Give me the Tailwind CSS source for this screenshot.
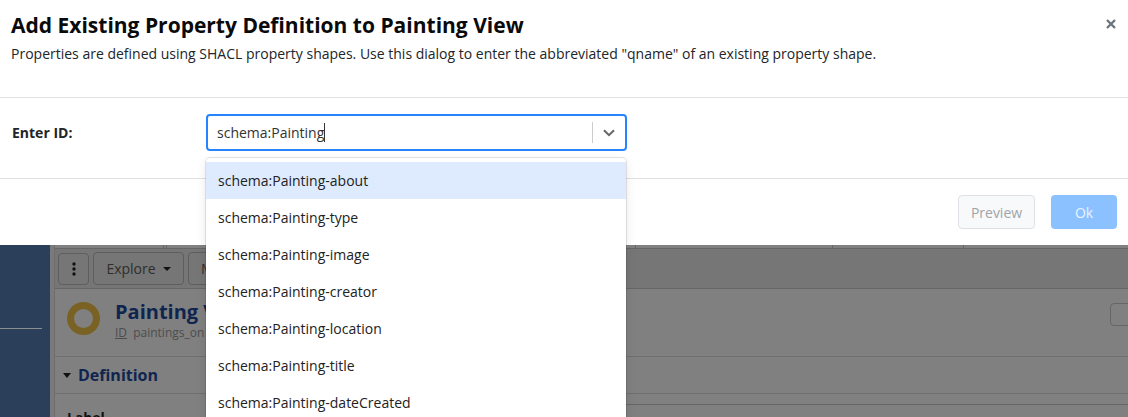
<!DOCTYPE html>
<html lang="en">
  <head>
    <meta charset="UTF-8" />
    <title>Add Existing Property Definition</title>
    <script src="https://cdn.jsdelivr.net/npm/@tailwindcss/browser@4"></script>
  </head>
  <body class="relative h-[417px] overflow-hidden bg-[#808080] font-['Open_Sans',sans-serif]">
    <!-- page behind the dialog -->
    <div class="flex h-[417px] pt-[245px]">
      <aside class="w-[50px] shrink-0 bg-[#2b3f5a] pt-[83px]">
        <div class="h-px w-[42px] bg-[#8a8f8f]"></div>
      </aside>
      <div class="w-[4px] shrink-0 bg-[#7a7a7a]"></div>
      <main class="flex-1 border-l border-[#6e6e6e]">
        <div class="flex h-[4px] border-b border-[#666]">
          <div class="ml-[108px] w-[4px] border-x border-[#666]"></div>
          <div class="ml-[468px] w-[198px] border-x border-[#666]"></div>
          <div class="ml-[2px] w-[129px] border-r border-[#666]"></div>
        </div>
        <div class="flex h-[40px] items-center gap-[4px] border-b border-[#666] bg-[#767676] px-[3px]">
          <button class="flex h-[32px] w-[31px] items-center justify-center rounded-[4px] border border-[#5e5e5e]">
            <svg width="4" height="14" viewBox="0 0 4 14" fill="#111"><circle cx="2" cy="2" r="1.7" /><circle cx="2" cy="7" r="1.7" /><circle cx="2" cy="12" r="1.7" /></svg>
          </button>
          <button class="flex h-[33px] w-[91px] items-center justify-center gap-[7px] rounded-[4px] border border-[#5e5e5e] pt-[1px] text-sm text-[#2e2e2e]">
            Explore
            <span class="h-0 w-0 border-x-[4px] border-t-[4px] border-x-transparent border-t-[#111]"></span>
          </button>
          <button class="h-[33px] w-[60px] rounded-[4px] border border-[#5e5e5e] pl-[12px] pt-[1px] text-left text-sm text-[#2e2e2e]">M</button>
        </div>
        <div class="flex h-[68px] border-b border-[#6f6f6f] pl-[12px] pt-[12px]">
          <div class="mt-[1px] size-[33px] rounded-full border-[7px] border-[#7a6224]"></div>
          <div class="ml-[15px]">
            <div class="mt-[-1px] text-xl/[24px] font-bold text-[#0f2550]">Painting View</div>
            <div class="mt-[1px] text-xs text-[#4d4d4d]"><span class="underline">ID</span> <span class="ml-[3px]">paintings_on</span></div>
          </div>
          <div class="mr-[-6px] ml-auto mt-[2px] h-[23px] w-[24px] rounded-[4px] border border-[#666]"></div>
        </div>
        <div class="flex h-[37px] items-center gap-[7px] border-b border-[#6f6f6f] pl-[8px]">
          <span class="h-0 w-0 border-x-[4.5px] border-t-[5px] border-x-transparent border-t-[#111]"></span>
          <span class="text-base font-bold text-[#0f2550]">Definition</span>
        </div>
        <div class="ml-[300px] h-[11px] border-b border-[#666]"></div>
        <div class="pl-[12px] pt-[3px] text-sm/[20px] font-bold text-[#111]">Label</div>
      </main>
    </div>

    <!-- dialog -->
    <div class="absolute inset-x-0 top-0 h-[245px] bg-white">
      <div class="relative h-[98px] border-b border-[#e0e0e0] pl-[11px] pt-[9px]">
        <h1 class="text-[21px]/[32px] font-bold text-[#0a0a0a]">Add Existing Property Definition to Painting View</h1>
        <p class="mt-[1px] text-sm/[24px] text-[#212529]">Properties are defined using SHACL property shapes. Use this dialog to enter the abbreviated "qname" of an existing property shape.</p>
        <button class="absolute right-[12px] top-[19px] text-[#6c757d]">
          <svg class="block" width="10" height="10" viewBox="0 0 10 10" fill="none" stroke="currentColor" stroke-width="2.4"><path d="M1 1l8 8M9 1l-8 8" /></svg>
        </button>
      </div>
      <div class="flex h-[81px] border-b border-[#e0e0e0] pl-[12px] pt-[16px]">
        <label class="w-[194px] pt-[9px] text-sm/[20px] font-bold text-[#212529]">Enter ID:</label>
        <div class="flex h-[37px] w-[421px] items-center rounded-[4px] border-2 border-[#2684ff] pl-[9px]">
          <span class="text-sm text-[#333]">schema:Painting</span>
          <span class="h-[19px] w-px bg-[#333]"></span>
          <span class="ml-auto h-[21px] w-px bg-[#ccc]"></span>
          <span class="flex w-[32px] justify-center">
            <svg width="12" height="8" viewBox="0 0 12 8" fill="none" stroke="#666" stroke-width="2"><path d="M1 1.2l5 5 5-5" /></svg>
          </span>
        </div>
      </div>
      <div class="flex h-[66px] items-center justify-end gap-[16px] pr-[11px]">
        <button class="h-[34px] w-[77px] rounded-[4px] border border-[#dee2e6] bg-[#f8f9fa] pt-[1px] text-sm text-[#a0a4a8]">Preview</button>
        <button class="h-[34px] w-[66px] rounded-[4px] bg-[#8cc1ff] pt-[1px] text-sm text-[#eaf4ff]">Ok</button>
      </div>
    </div>

    <!-- dropdown menu -->
    <ul class="absolute left-[206px] top-[158px] w-[420px] rounded-[4px] bg-white pt-[4px] text-sm/[37px] text-[#222] shadow-[0_0_0_1px_rgba(0,0,0,0.1),0_4px_11px_rgba(0,0,0,0.1)]">
      <li class="h-[37px] bg-[#deebff] pl-[12px]">schema:Painting-about</li>
      <li class="h-[37px] pl-[12px]">schema:Painting-type</li>
      <li class="h-[37px] pl-[12px]">schema:Painting-image</li>
      <li class="h-[37px] pl-[12px]">schema:Painting-creator</li>
      <li class="h-[37px] pl-[12px]">schema:Painting-location</li>
      <li class="h-[37px] pl-[12px]">schema:Painting-title</li>
      <li class="h-[37px] pl-[12px]">schema:Painting-dateCreated</li>
    </ul>
  </body>
</html>
